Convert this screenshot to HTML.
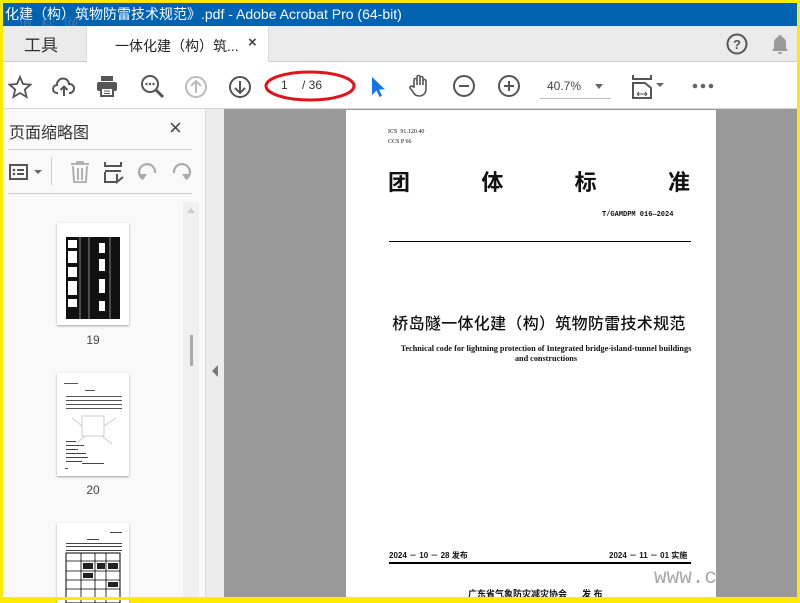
<!DOCTYPE html>
<html><head><meta charset="utf-8"><style>
*{margin:0;padding:0;box-sizing:border-box}
body{width:800px;height:600px;overflow:hidden;background:#ffeb00;position:relative;font-family:"Liberation Sans","Noto Sans CJK SC",sans-serif}
.abs{position:absolute}
.title{left:3px;top:3px;width:794px;height:23px;background:#0063b1;color:#fff;font-size:14px;line-height:22px;padding-left:2px;white-space:nowrap;overflow:hidden}
.tabs{left:3px;top:26px;width:794px;height:36px;background:#ebebeb;border-bottom:1px solid #ccc}
.tb{left:3px;top:62px;width:794px;height:47px;background:#fff;border-bottom:1px solid #d6d6d6}
.panel{left:3px;top:109px;width:203px;height:488px;background:#f9f9f9;border-right:1px solid #ddd}
.strip{left:206px;top:109px;width:18px;height:488px;background:#ececec}
.doc{left:224px;top:109px;width:573px;height:488px;background:#999}
.page{left:346px;top:110px;width:370px;height:487px;background:#fff}
.thumb{position:absolute;left:54px;width:72px;background:#fff;box-shadow:0 1px 2px rgba(0,0,0,.35)}
.lbl{position:absolute;left:54px;width:72px;text-align:center;font-size:12px;color:#444}
svg{position:absolute}
</style></head><body>
<div class="abs title">化建（构）筑物防雷技术规范》.pdf - Adobe Acrobat Pro (64-bit)</div>
<div class="abs" style="left:18px;top:13px;font-size:15px;color:rgba(120,140,170,.6);font-family:'Noto Serif CJK SC',serif;letter-spacing:2px">道 标 网</div>
<div class="abs tabs">
 <div class="abs" style="left:21px;top:5px;font-size:17px;color:#333">工具</div>
 <div class="abs" style="left:83px;top:0;width:183px;height:36px;background:#fff;border-left:1px solid #ddd;border-right:1px solid #ddd"></div>
 <div class="abs" style="left:112px;top:10px;font-size:14px;color:#222">一体化建（构）筑...</div>
 <div class="abs" style="left:245px;top:8px;font-size:15px;color:#444;font-weight:bold">×</div>
 <svg style="left:723px;top:7px" width="22" height="22"><circle cx="11" cy="11" r="9.5" fill="none" stroke="#555" stroke-width="2"/><text x="11" y="16" font-size="13" text-anchor="middle" fill="#555" font-weight="bold" font-family="Liberation Sans">?</text></svg>
 <svg style="left:767px;top:7px" width="20" height="22"><path d="M10 2a2 2 0 0 1 2 2 6 6 0 0 1 4 6v5l2 3H2l2-3v-5a6 6 0 0 1 4-6 2 2 0 0 1 2-2zM8 19h4a2 2 0 0 1-4 0z" fill="#999"/></svg>
</div>
<div class="abs tb">
 <svg style="left:5px;top:13px" width="24" height="24"><path d="M12 2l3 7 7.5.6-5.7 5 1.8 7.4L12 18l-6.6 4 1.8-7.4-5.7-5L9 9z" fill="none" stroke="#555" stroke-width="1.8"/></svg>
 <svg style="left:49px;top:13px" width="24" height="24"><path d="M6 18H5a4 4 0 0 1 0-8 6 6 0 0 1 12-1 4.5 4.5 0 0 1 1 9h-1M12 21v-9M8.5 15l3.5-3.5 3.5 3.5" fill="none" stroke="#555" stroke-width="2"/></svg>
 <svg style="left:92px;top:12px" width="24" height="24"><rect x="6" y="2" width="12" height="5" fill="#555"/><rect x="2" y="8" width="20" height="9" rx="2" fill="#555"/><rect x="6" y="14" width="12" height="8" fill="#fff" stroke="#555" stroke-width="2"/><path d="M9 17h6M9 19.5h6" stroke="#555"/></svg>
 <svg style="left:137px;top:12px" width="26" height="26"><circle cx="10" cy="10" r="8" fill="none" stroke="#555" stroke-width="2"/><path d="M16 16l7 7" stroke="#555" stroke-width="3"/><circle cx="6.5" cy="10" r="1.2" fill="#555"/><circle cx="10" cy="10" r="1.2" fill="#555"/><circle cx="13.5" cy="10" r="1.2" fill="#555"/></svg>
 <svg style="left:181px;top:13px" width="24" height="24"><circle cx="12" cy="12" r="10" fill="none" stroke="#bbb" stroke-width="2"/><path d="M12 18V6M7 11l5-5 5 5" fill="none" stroke="#bbb" stroke-width="2"/></svg>
 <svg style="left:225px;top:13px" width="24" height="24"><circle cx="12" cy="12" r="10" fill="none" stroke="#555" stroke-width="2"/><path d="M12 6v12M7 13l5 5 5-5" fill="none" stroke="#555" stroke-width="2"/></svg>
 <div class="abs" style="left:278px;top:16px;font-size:12px;color:#333">1</div>
 <div class="abs" style="left:299px;top:16px;font-size:12px;color:#333">/ 36</div>
 <svg style="left:260px;top:4px" width="95" height="38"><ellipse cx="47" cy="20" rx="44" ry="14" fill="none" stroke="#e0141e" stroke-width="3"/></svg>
 <svg style="left:366px;top:13px" width="18" height="24"><path d="M3 2v18l4.5-4.5 3 6.5 2.5-1.2-3-6.3H16z" fill="#1473e6"/></svg>
 <svg style="left:404px;top:11px" width="26" height="26"><path d="M7 14V7a1.5 1.5 0 0 1 3 0v5V4a1.5 1.5 0 0 1 3 0v8V5a1.5 1.5 0 0 1 3 0v7V8a1.5 1.5 0 0 1 3 0v8c0 4-3 7-6.5 7S8 22 6 19l-3-4a1.5 1.5 0 0 1 2.5-1.5z" fill="none" stroke="#555" stroke-width="1.6"/></svg>
 <svg style="left:449px;top:12px" width="24" height="24"><circle cx="12" cy="12" r="10" fill="none" stroke="#555" stroke-width="2"/><path d="M7 12h10" stroke="#555" stroke-width="2"/></svg>
 <svg style="left:494px;top:12px" width="24" height="24"><circle cx="12" cy="12" r="10" fill="none" stroke="#555" stroke-width="2"/><path d="M7 12h10M12 7v10" stroke="#555" stroke-width="2"/></svg>
 <div class="abs" style="left:544px;top:17px;font-size:12px;color:#444">40.7%</div>
 <div class="abs" style="left:537px;top:36px;width:71px;height:1px;background:#bbb"></div>
 <svg style="left:591px;top:22px" width="10" height="6"><path d="M1 0h8L5 5z" fill="#666"/></svg>
 <svg style="left:628px;top:12px" width="34" height="26"><path d="M2 1v4h18V1M2 9h12l6 5v10H2z" fill="none" stroke="#555" stroke-width="2"/><path d="M6 20h10M6 20l2-2M6 20l2 2M16 20l-2-2M16 20l-2 2" stroke="#555" stroke-width="1"/><path d="M25 9h8l-4 4z" fill="#666"/></svg>
 <svg style="left:689px;top:21px" width="22" height="6"><circle cx="3" cy="3" r="2.3" fill="#666"/><circle cx="11" cy="3" r="2.3" fill="#666"/><circle cx="19" cy="3" r="2.3" fill="#666"/></svg>
</div>
<div class="abs panel">
 <div class="abs" style="left:6px;top:10px;font-size:16px;color:#333">页面缩略图</div>
 <div class="abs" style="left:166px;top:6px;font-size:22px;color:#444">×</div>
 <div class="abs" style="left:5px;top:40px;width:184px;height:1px;background:#ccc"></div>
 <svg style="left:6px;top:53px" width="36" height="20"><rect x="1" y="3" width="17" height="14" fill="none" stroke="#555" stroke-width="2"/><path d="M8 8h7M8 12h7" stroke="#555" stroke-width="2"/><circle cx="5" cy="8" r="1.3" fill="#555"/><circle cx="5" cy="12" r="1.3" fill="#555"/><path d="M25 8h8l-4 4z" fill="#666"/></svg>
 <div class="abs" style="left:48px;top:48px;width:1px;height:28px;background:#ccc"></div>
 <svg style="left:66px;top:51px" width="22" height="24"><path d="M2 4h18M8 4V2h6v2M4 6l1 16h12l1-16M9 8v12M13 8v12" fill="none" stroke="#aaa" stroke-width="1.8"/></svg>
 <svg style="left:100px;top:51px" width="22" height="24"><path d="M2 2v4h16V2M2 11h16M2 12v10h12M14 14v8l6-5" fill="none" stroke="#555" stroke-width="2"/></svg>
 <svg style="left:133px;top:52px" width="24" height="22"><path d="M7 18A8 8 0 1 1 19 12" fill="none" stroke="#aaa" stroke-width="2.2"/><path d="M2 13l5 6 4-6z" fill="#aaa"/></svg>
 <svg style="left:166px;top:52px" width="24" height="22"><path d="M17 18A8 8 0 1 0 5 12" fill="none" stroke="#aaa" stroke-width="2.2"/><path d="M22 13l-5 6-4-6z" fill="#aaa"/></svg>
 <div class="abs" style="left:5px;top:84px;width:184px;height:1px;background:#ccc"></div>
 <div class="abs" style="left:180px;top:93px;width:16px;height:395px;background:#f0f0f0"></div>
 <svg style="left:183px;top:97px" width="10" height="8"><path d="M1 7h8L5 2z" fill="#ccc"/></svg>
 <div class="abs" style="left:187px;top:226px;width:3px;height:31px;background:#aaa"></div>
 <div class="thumb" style="top:114px;height:102px"><svg style="left:9px;top:14px" width="54" height="82"><rect width="54" height="82" fill="#111"/><g fill="#fff"><rect x="2" y="3" width="9" height="8"/><rect x="2" y="14" width="9" height="12"/><rect x="2" y="30" width="9" height="10"/><rect x="2" y="44" width="9" height="14"/><rect x="2" y="62" width="9" height="8"/><rect x="33" y="6" width="6" height="10"/><rect x="33" y="22" width="6" height="12"/><rect x="33" y="42" width="6" height="14"/><rect x="33" y="64" width="6" height="10"/></g><g stroke="#fff" stroke-width="0.5"><path d="M14 0v82M23 0v82M44 0v82"/></g></svg></div>
 <div class="lbl" style="top:224px">19</div>
 <div class="thumb" style="top:264px;height:103px"><svg style="left:0;top:0" width="72" height="103"><g fill="#555"><rect x="7" y="10" width="14" height="1"/><rect x="28" y="17" width="10" height="1"/><rect x="9" y="23" width="56" height="1"/><rect x="9" y="27" width="56" height="1"/><rect x="9" y="31" width="56" height="1"/><rect x="9" y="35" width="56" height="1"/></g><g fill="none" stroke="#ccc"><rect x="25" y="43" width="22" height="20"/><path d="M15 45l10 8M47 53l12-8M20 70l8-7M45 63l10 8"/></g><g fill="#444"><rect x="9" y="68" width="10" height="1"/><rect x="9" y="72" width="18" height="1"/><rect x="9" y="76" width="12" height="1"/><rect x="9" y="80" width="20" height="1"/><rect x="9" y="84" width="22" height="1"/><rect x="9" y="88" width="16" height="1"/><rect x="25" y="90" width="22" height="1"/><rect x="8" y="95" width="3" height="1"/></g></svg></div>
 <div class="lbl" style="top:374px">20</div>
 <div class="thumb" style="top:414px;height:80px"><svg style="left:0;top:0" width="72" height="80"><g fill="#444"><rect x="53" y="9" width="12" height="1"/><rect x="30" y="16" width="12" height="1"/><rect x="9" y="20" width="56" height="1"/><rect x="9" y="23" width="56" height="1"/><rect x="9" y="27" width="56" height="1"/></g><rect x="9" y="30" width="54" height="50" fill="#fff" stroke="#000"/><g stroke="#000" stroke-width="0.8"><path d="M24 30v50M38 30v50M49 30v50M9 38h54M9 48h54M9 57h54M9 66h54"/></g><g fill="#222"><rect x="26" y="40" width="10" height="6"/><rect x="40" y="40" width="8" height="6"/><rect x="51" y="40" width="10" height="6"/><rect x="26" y="50" width="10" height="5"/><rect x="51" y="59" width="10" height="5"/></g></svg></div>
</div>
<div class="abs strip"><svg style="left:5px;top:256px" width="8" height="12"><path d="M7 0v12L1 6z" fill="#777"/></svg></div>
<div class="abs doc"></div>
<div class="abs page">
 <div class="abs" style="left:42px;top:17px;font-size:6px;color:#111;font-family:'Liberation Serif',serif;line-height:10px">ICS&nbsp; 91.120.40<br>CCS P 66</div>
 <div class="abs" style="left:42px;top:56px;width:302px;font-size:22px;font-weight:bold;color:#111;font-family:'Noto Sans CJK SC',sans-serif;display:flex;justify-content:space-between;line-height:30px"><span>团</span><span>体</span><span>标</span><span>准</span></div>
 <div class="abs" style="left:256px;top:101px;font-size:7px;font-weight:bold;color:#111;font-family:'Liberation Mono',monospace">T/GAMDPM 016—2024</div>
 <div class="abs" style="left:43px;top:131px;width:302px;height:1px;background:#000"></div>
 <div class="abs" style="left:0;top:200px;width:370px;text-align:center;font-size:16px;font-weight:500;color:#111;font-family:'Noto Sans CJK SC',sans-serif;padding-left:16px;letter-spacing:0.3px">桥岛隧一体化建（构）筑物防雷技术规范</div>
 <div class="abs" style="left:30px;top:234px;width:340px;text-align:center;font-size:8.2px;font-weight:bold;color:#111;font-family:'Liberation Serif',serif;line-height:10px">Technical code for lightning protection of Integrated bridge-island-tunnel buildings<br>and constructions</div>
 <div class="abs" style="left:43px;top:440px;font-size:8px;font-weight:bold;color:#111">2024 － 10 － 28 发布</div>
 <div class="abs" style="left:263px;top:440px;font-size:8px;font-weight:bold;color:#111">2024 － 11 － 01 实施</div>
 <div class="abs" style="left:43px;top:452px;width:302px;height:1.5px;background:#000"></div>
 <div class="abs" style="left:122px;top:477px;font-size:9px;font-weight:bold;color:#111;white-space:nowrap">广东省气象防灾减灾协会&nbsp;&nbsp;&nbsp;&nbsp;&nbsp; 发 布</div>
</div>
<div class="abs" style="left:654px;top:567px;font-size:21px;color:#999;font-family:'Liberation Mono',monospace;opacity:.85;width:62px;overflow:hidden;white-space:nowrap">www.cn</div>
<div class="abs" style="left:0;top:597px;width:800px;height:3px;background:#ffeb00"></div>
</body></html>
